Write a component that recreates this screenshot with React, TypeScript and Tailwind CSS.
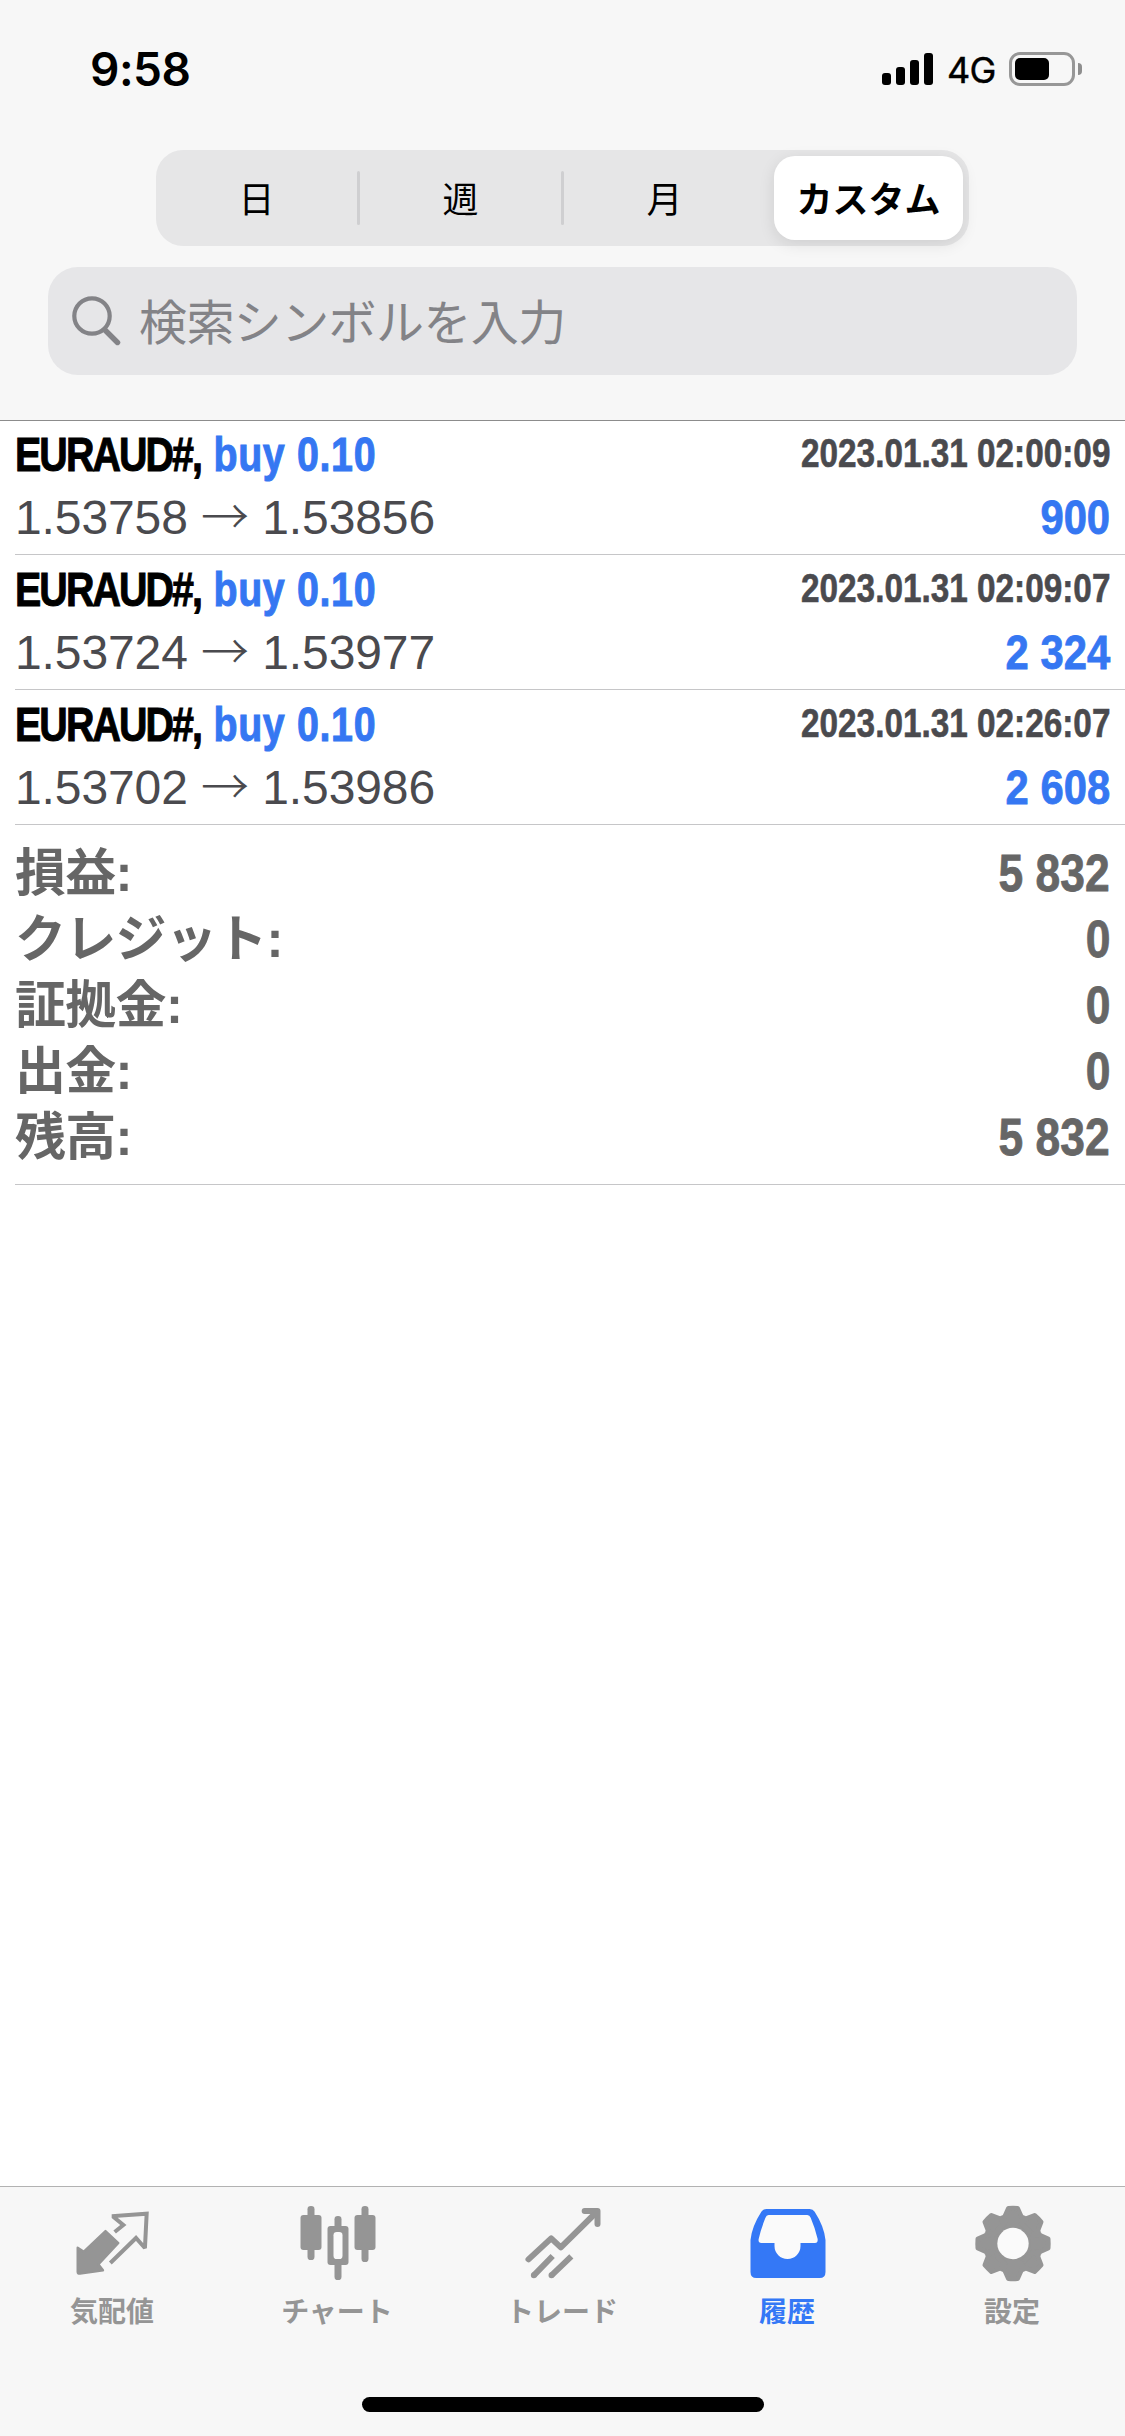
import React from 'react';
import { clsx } from 'clsx';

interface Deal {
  symbol: string;
  volume: string;
  open: string;
  close: string;
  time: string;
  profit: number;
}

const deals: Deal[] = [
  { symbol: 'EURAUD#', volume: 'buy 0.10', open: '1.53758', close: '1.53856', time: '2023.01.31 02:00:09', profit: 900 },
  { symbol: 'EURAUD#', volume: 'buy 0.10', open: '1.53724', close: '1.53977', time: '2023.01.31 02:09:07', profit: 2324 },
  { symbol: 'EURAUD#', volume: 'buy 0.10', open: '1.53702', close: '1.53986', time: '2023.01.31 02:26:07', profit: 2608 },
];

const summary = [
  { label: '損益', value: 5832 },
  { label: 'クレジット', value: 0 },
  { label: '証拠金', value: 0 },
  { label: '出金', value: 0 },
  { label: '残高', value: 5832 },
];

// Thousands are separated with a space: 5832 -> "5 832"
function formatAmount(amount: number): string {
  return String(amount).replace(/\B(?=(\d{3})+$)/g, ' ');
}

function StatusBar() {
  return (
    <div className="flex h-[138px] items-center justify-between pl-[90px] pr-[43px]">
      <span className="font-['Inter'] text-[46px] leading-none font-semibold tracking-[-0.5px] text-black">9:58</span>
      <div className="flex items-center">
        <div className="flex h-8 items-end gap-[5px]">
          <div className="h-3 w-[9px] rounded-[3px] bg-black" />
          <div className="h-[18px] w-[9px] rounded-[3px] bg-black" />
          <div className="h-[25px] w-[9px] rounded-[3px] bg-black" />
          <div className="h-8 w-[9px] rounded-[3px] bg-black" />
        </div>
        <span className="ml-[14px] w-[62px] pt-0.5 font-['Inter'] text-[36px] leading-none tracking-[-0.8px] text-black [-webkit-text-stroke:0.4px]">
          4G
        </span>
        <div className="flex h-[34px] w-[66px] rounded-[11px] border-[3px] border-[#979797] p-[3px]">
          <div className="w-[34px] rounded-[5px] bg-black" />
        </div>
        <div className="ml-[3px] h-3 w-1 rounded-r-full bg-[#8e8e8e]" />
      </div>
    </div>
  );
}

function PeriodPicker() {
  return (
    <div className="ml-[156px] flex h-24 w-[813px] items-center rounded-[27px] bg-[#e6e6e7] font-['Noto_Sans_CJK_JP',sans-serif] text-[36px] leading-none text-black">
      <span className="w-[201px] pb-[3px] text-center">日</span>
      <div className="h-[54px] w-[3px] rounded-full bg-[#cfcfd1]" />
      <span className="w-[201px] pb-[3px] text-center">週</span>
      <div className="h-[54px] w-[3px] rounded-full bg-[#cfcfd1]" />
      <span className="w-[201px] pb-[3px] text-center">月</span>
      <div className="ml-[9px] flex h-[84px] w-[189px] items-center justify-center rounded-[21px] bg-white pb-[3px] font-bold shadow-[0_4px_16px_rgba(0,0,0,0.1)]">
        カスタム
      </div>
    </div>
  );
}

function SearchField() {
  return (
    <div className="mx-12 mt-[21px] flex h-[108px] items-center rounded-[30px] bg-[#e6e6e8] pl-6">
      <svg width="50" height="50" viewBox="0 0 50 50" fill="none" stroke="#838387" strokeLinecap="round">
        <circle cx="20" cy="20" r="17.7" strokeWidth="4.2" />
        <path d="M33 34L45.5 46.5" strokeWidth="5.4" />
      </svg>
      <span className="ml-[17px] pb-1 font-['Noto_Sans_CJK_JP',sans-serif] text-[48px] leading-none tracking-[-0.6px] text-[#838387]">
        検索シンボルを入力
      </span>
    </div>
  );
}

function DealRow({ deal }: { deal: Deal }) {
  return (
    <div className="ml-[15px] h-[135px] border-b border-[#c6c6c8] pt-1 pr-[15px] font-['Liberation_Sans',sans-serif]">
      <div className="flex h-[62px] items-center justify-between font-bold">
        <div className="origin-left scale-x-[0.82] text-[48px] leading-none whitespace-nowrap [-webkit-text-stroke:1px]">
          <span className="tracking-[-2.3px] text-black">{deal.symbol},</span>
          <span className="ml-[15px] tracking-[0.8px] text-[#3577f2]">{deal.volume}</span>
        </div>
        <span className="origin-right scale-x-[0.833] pb-1 text-[40px] leading-none text-[#4a4a4e] [-webkit-text-stroke:0.6px]">
          {deal.time}
        </span>
      </div>
      <div className="flex h-16 items-center justify-between">
        <div className="text-[48px] leading-none tracking-[-0.1px] text-[#4a4a4e]">
          {deal.open} <span className="font-['Noto_Sans_CJK_JP',sans-serif] leading-[0] font-light">→</span> {deal.close}
        </div>
        <span className="origin-right scale-x-[0.87] text-[48px] leading-none font-bold text-[#3577f2] [-webkit-text-stroke:0.8px]">
          {formatAmount(deal.profit)}
        </span>
      </div>
    </div>
  );
}

function Summary() {
  return (
    <div className="ml-[15px] h-[360px] border-b border-[#c6c6c8] pt-[15px] pr-[15px]">
      {summary.map((row) => (
        <div
          key={row.label}
          className="flex h-[66px] items-center justify-between font-['Liberation_Sans','Noto_Sans_CJK_JP',sans-serif] text-[51px] leading-[51px] font-bold text-[#666]"
        >
          <span className="tracking-[-0.7px]">{row.label}:</span>
          <span className="origin-right scale-x-[0.87] [-webkit-text-stroke:0.8px]">{formatAmount(row.value)}</span>
        </div>
      ))}
    </div>
  );
}

function QuotesIcon() {
  return (
    <>
      <path
        d="M112.5 93L151 129L91 193L105 211L36 221Q29 221 29 215V143L47.5 155Z"
        fill="currentColor"
        stroke="currentColor"
        strokeWidth="7"
        strokeLinejoin="round"
      />
      <path d="M140 96L166 75L137 51V48L236 41L231 140L228 141L204 114L127 189" fill="none" stroke="currentColor" strokeWidth="12" />
    </>
  );
}

function ChartIcon() {
  return (
    <g fill="currentColor">
      <rect x="43.5" y="18" width="21" height="162" rx="10" />
      <rect x="22.5" y="45" width="63" height="105" rx="9" />
      <rect x="124.5" y="48" width="21" height="192" rx="10" />
      <rect x="103.5" y="78" width="63" height="117" rx="9" />
      <rect x="121.5" y="96" width="27" height="81" rx="10" fill="#fafafa" />
      <rect x="205.5" y="18" width="21" height="168" rx="10" />
      <rect x="184.5" y="45" width="63" height="105" rx="9" />
    </g>
  );
}

function TradeIcon() {
  return (
    <g fill="none" stroke="currentColor" strokeWidth="18" strokeLinejoin="round">
      <path d="M31.5 178L99.5 115L128.5 142L236 36" strokeLinecap="round" />
      <path d="M200 33H238.5V72" strokeLinecap="round" />
      <path d="M47.5 226L104 168M100.5 226L160 169" />
      <path d="M47.5 226h.01M100.5 226h.01" strokeLinecap="round" />
    </g>
  );
}

function HistoryIcon() {
  return (
    <>
      <path
        d="M22.5 120Q26 80 55 35Q60 27 70 27H200Q210 27 215 35Q244 80 247.5 120V216Q247.5 234 230 234H40Q22.5 234 22.5 216Z"
        fill="currentColor"
      />
      <path
        d="M77 45H193Q200 46 203 53Q216 83 224 117Q225 129 216 129H172.5V138A39 39 0 0 1 94.5 138V129H55Q45 128 47 117Q53 89 67 54Q70 45 77 45Z"
        fill="#fafafa"
      />
    </>
  );
}

function SettingsIcon() {
  return (
    <g fill="currentColor" stroke="currentColor" strokeLinejoin="round">
      <circle cx="135" cy="130.5" r="90" />
      {[0, 45, 90, 135, 180, 225, 270, 315].map((angle) => (
        <path
          key={angle}
          d="M121 25Q135 24 149 25L161 52V70H109V52Z"
          strokeWidth="14"
          transform={`rotate(${angle} 135 130.5)`}
        />
      ))}
      <circle cx="135" cy="130.5" r="47" fill="#fafafa" stroke="none" />
    </g>
  );
}

const tabs = [
  { label: '気配値', Icon: QuotesIcon },
  { label: 'チャート', Icon: ChartIcon },
  { label: 'トレード', Icon: TradeIcon },
  { label: '履歴', Icon: HistoryIcon, active: true },
  { label: '設定', Icon: SettingsIcon },
];

function TabBar() {
  return (
    <div className="flex h-[250px] flex-col border-t border-[#b2b2b2] bg-[#f7f7f7]">
      <div className="flex pt-[13px]">
        {tabs.map(({ label, Icon, active }) => (
          <div key={label} className={clsx('flex w-[225px] flex-col items-center', active ? 'text-[#3478f6]' : 'text-[#959595]')}>
            <svg width="90" height="85" viewBox="0 0 270 255">
              <Icon />
            </svg>
            <span className="mt-[11px] mr-px font-['Noto_Sans_CJK_JP',sans-serif] text-[28px] leading-[28px] font-bold">{label}</span>
          </div>
        ))}
      </div>
      <div className="mx-auto mt-auto mb-6 h-[15px] w-[402px] rounded-full bg-black" />
    </div>
  );
}

export default function App() {
  return (
    <div className="flex h-[2436px] w-[1125px] flex-col bg-white">
      <header className="h-[421px] border-b border-[#8c8c8c] bg-[#f7f7f7]">
        <StatusBar />
        <div className="h-3" />
        <PeriodPicker />
        <SearchField />
      </header>
      <main className="flex-1">
        <div className="-mt-px">
          {deals.map((deal) => (
            <DealRow key={deal.time} deal={deal} />
          ))}
          <Summary />
        </div>
      </main>
      <TabBar />
    </div>
  );
}
